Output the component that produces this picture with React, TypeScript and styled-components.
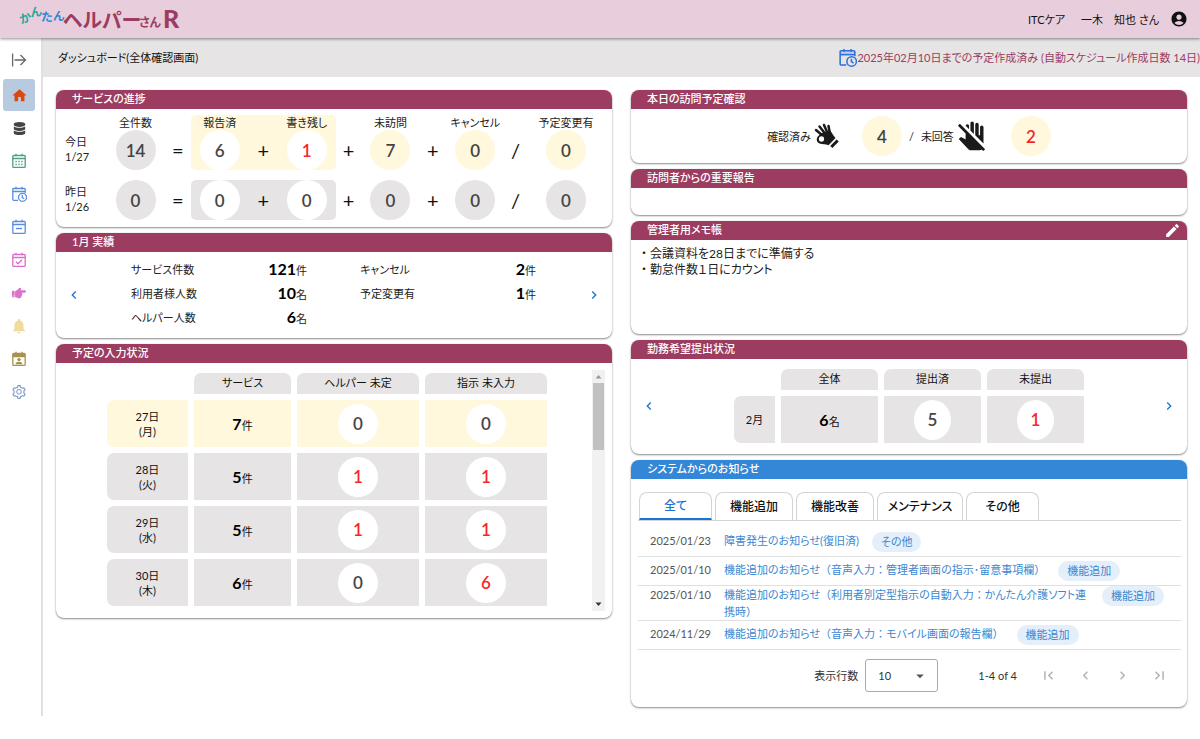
import React from "react";
import styled, { createGlobalStyle, css } from "styled-components";
import {
  MdAccountCircle,
  MdArrowDropDown,
  MdChevronLeft,
  MdChevronRight,
  MdDoNotTouch,
  MdEdit,
  MdFirstPage,
  MdHome,
  MdLastPage,
  MdNotifications,
} from "react-icons/md";
import { FaDatabase, FaHandPointRight } from "react-icons/fa";
import { AiOutlineSetting } from "react-icons/ai";

const color = {
  wine: "#9c3c60",
  blue: "#3486d7",
  link: "#3c87d0",
  grey: "#e6e4e5",
  cream: "#fff8dc",
  red: "#f8262a",
  ink: "#222",
};

const GlobalStyle = createGlobalStyle`
  * { box-sizing: border-box; }
  body {
    margin: 0;
    background: #fff;
    color: ${color.ink};
    font-family: Lato, "Noto Sans CJK JP", sans-serif;
    font-feature-settings: "palt";
    font-size: 11px;
    line-height: 15px;
  }
  button, select { font: inherit; color: inherit; font-feature-settings: inherit; }
  h1, h2, p, ul, dl, dd { margin: 0; padding: 0; font: inherit; }
  ul { list-style: none; }
`;

/* ---------- frame ---------- */

const TopBar = styled.header`
  position: relative;
  display: flex;
  align-items: center;
  justify-content: space-between;
  height: 38px;
  padding: 0 12px 0 18px;
  background: #e8cedc;
  box-shadow: 0 1px 3px rgba(0, 0, 0, 0.45);
`;

const LogoLink = styled.a`
  display: flex;
  svg { display: block; font-weight: 700; }
`;

const Account = styled.div`
  display: flex;
  align-items: center;
  gap: 16px;
  color: #111;
`;

const UserButton = styled.button`
  display: flex;
  align-items: center;
  gap: 11px;
  padding: 0;
  border: 0;
  background: none;
`;

const Frame = styled.div`
  display: flex;
`;

const SideNav = styled.nav`
  flex: none;
  width: 43px;
  padding: 6px 3px 0;
  border-right: 2px solid #e0e0e0;
`;

const NavList = styled.ul`
  display: flex;
  flex-direction: column;
  gap: 1px;
  padding-top: 3px;
`;

const navItem = css`
  display: flex;
  align-items: center;
  justify-content: center;
  width: 32px;
  height: 32px;
  border-radius: 3px;
`;

const NavLink = styled.a<{ $tint: string; $active?: boolean }>`
  ${navItem}
  color: ${(p) => p.$tint};
  background: ${(p) => (p.$active ? "#b7cae0" : "transparent")};
`;

const Toggle = styled.button`
  ${navItem}
  padding: 0;
  border: 0;
  background: none;
  color: #666;
`;

const Page = styled.div`
  flex: 1;
  min-width: 0;
`;

const TitleBar = styled.div`
  display: flex;
  align-items: center;
  justify-content: space-between;
  height: 39px;
  padding-left: 15px;
  background: ${color.grey};
`;

const PageTitle = styled.h1`
  color: #111;
`;

const ScheduleNote = styled.p`
  display: flex;
  align-items: center;
  white-space: nowrap;
  color: ${color.wine};
  svg { color: #2f6fe0; }
`;

const Columns = styled.main`
  display: grid;
  grid-template-columns: 1fr 1fr;
  gap: 19px;
  padding: 13px 13px 9px;
`;

const Column = styled.div`
  display: flex;
  flex-direction: column;
  gap: 6px;
  min-width: 0;
`;

/* ---------- card ---------- */

const CardBox = styled.section`
  border-radius: 8px;
  background: #fff;
  box-shadow: 0 1px 2px rgba(0, 0, 0, 0.45), 0 0 1px rgba(0, 0, 0, 0.2);
`;

const CardHead = styled.div<{ $tone: string }>`
  display: flex;
  justify-content: space-between;
  height: 19px;
  padding: 0 6px 0 16px;
  border-radius: 8px 8px 0 0;
  background: ${(p) => p.$tone};
  color: #fff;
  line-height: 17px;
  font-weight: 500;
  h2 { font-weight: 500; }
`;

const HeadButton = styled.button`
  display: flex;
  align-items: center;
  padding: 0;
  border: 0;
  background: none;
`;

function Card(props: {
  title: string;
  tone?: string;
  action?: React.ReactNode;
  children?: React.ReactNode;
}) {
  return (
    <CardBox>
      <CardHead $tone={props.tone ?? color.wine}>
        <h2>{props.title}</h2>
        {props.action}
      </CardHead>
      {props.children}
    </CardBox>
  );
}

const Circle = styled.span<{ $bg?: string; $alert?: boolean; $narrow?: boolean }>`
  display: flex;
  flex: none;
  align-items: center;
  justify-content: center;
  width: ${(p) => (p.$narrow ? 37 : 40)}px;
  height: 40px;
  border-radius: 50%;
  background: ${(p) => p.$bg ?? "#fff"};
  color: ${(p) => (p.$alert ? color.red : "#444")};
  font-size: 17px;
  font-weight: 600;
`;

const ArrowButton = styled.button`
  display: flex;
  flex: none;
  padding: 0;
  border: 0;
  background: none;
  color: #1976d2;
`;

/* ---------- service progress ---------- */

const Progress = styled.div`
  display: flex;
  flex-direction: column;
  gap: 10px;
  padding: 6px 16px 7px 9px;
`;

const ProgressRow = styled.div`
  display: grid;
  grid-template-columns: 50px 41px 44fr 127px 44fr 40px 45fr 40px 41fr 60px;
  align-items: end;
`;

const DayLabel = styled.div`
  align-self: end;
  padding-bottom: 6px;
`;

const Stat = styled.div`
  display: flex;
  flex-direction: column;
  align-items: center;
  white-space: nowrap;
`;

const Sign = styled.span`
  justify-self: center;
  height: 40px;
  line-height: 40px;
  font-size: 20px;
  text-align: center;
  color: #111;
`;

const Reported = styled.div<{ $bg: string }>`
  display: grid;
  grid-template-columns: 40px 1fr 40px;
  align-items: end;
  margin: 0 -9px;
  padding: 0 9px;
  border-radius: 5px;
  background: ${(p) => p.$bg};
`;

type Day = { name: string; date: string; counts: number[]; today?: boolean };

const days: Day[] = [
  { name: "今日", date: "1/27", counts: [14, 6, 1, 7, 0, 0], today: true },
  { name: "昨日", date: "1/26", counts: [0, 0, 0, 0, 0, 0] },
];

const statNames = ["全件数", "報告済", "書き残し", "未訪問", "キャンセル", "予定変更有"];

function ProgressCard() {
  return (
    <Card title="サービスの進捗">
      <Progress>
        {days.map((day) => {
          const tone = day.today ? color.cream : color.grey;
          const stat = (i: number, bg: string) => (
            <Stat>
              {day.today && <span>{statNames[i]}</span>}
              <Circle $bg={bg} $alert={i === 2 && day.counts[i] > 0}>
                {day.counts[i]}
              </Circle>
            </Stat>
          );
          return (
            <ProgressRow key={day.date}>
              <DayLabel>
                {day.name}
                <br />
                {day.date}
              </DayLabel>
              {stat(0, color.grey)}
              <Sign>=</Sign>
              <Reported $bg={tone}>
                {stat(1, "#fff")}
                <Sign>+</Sign>
                {stat(2, "#fff")}
              </Reported>
              <Sign>+</Sign>
              {stat(3, tone)}
              <Sign>+</Sign>
              {stat(4, tone)}
              <Sign>/</Sign>
              {stat(5, tone)}
            </ProgressRow>
          );
        })}
      </Progress>
    </Card>
  );
}

/* ---------- monthly results ---------- */

const Results = styled.div`
  display: flex;
  align-items: center;
  padding: 0 10px;
`;

const ResultColumns = styled.div`
  flex: 1;
  display: grid;
  grid-template-columns: 1fr 1fr;
  gap: 53px;
  padding: 5px 50px 9px 49px;
`;

const ResultRow = styled.div`
  display: flex;
  align-items: center;
  justify-content: space-between;
  height: 24px;
`;

const Big = styled.span`
  font-size: 16px;
  line-height: 24px;
  font-weight: 700;
  color: #000;
`;

const results = [
  [
    ["サービス件数", "121", "件"],
    ["利用者様人数", "10", "名"],
    ["ヘルパー人数", "6", "名"],
  ],
  [
    ["キャンセル", "2", "件"],
    ["予定変更有", "1", "件"],
  ],
];

function ResultsCard() {
  return (
    <Card title="1月 実績">
      <Results>
        <ArrowButton aria-label="前の月">
          <MdChevronLeft size={16} />
        </ArrowButton>
        <ResultColumns>
          {results.map((rows, i) => (
            <dl key={i}>
              {rows.map(([name, value, unit]) => (
                <ResultRow key={name}>
                  <dt>{name}</dt>
                  <dd>
                    <Big>{value}</Big>
                    {unit}
                  </dd>
                </ResultRow>
              ))}
            </dl>
          ))}
        </ResultColumns>
        <ArrowButton aria-label="次の月">
          <MdChevronRight size={16} />
        </ArrowButton>
      </Results>
    </Card>
  );
}

/* ---------- tables ---------- */

const Grid = styled.table`
  border-collapse: separate;
  border-spacing: 6px;
  table-layout: fixed;
  text-align: center;
  color: #111;
`;

const HeadCell = styled.th<{ $w: number }>`
  width: ${(p) => p.$w}px;
  height: 21px;
  padding: 0 0 2px;
  border-radius: 7px 7px 0 0;
  background: ${color.grey};
  font-weight: 400;
`;

const CornerCell = styled.td<{ $w: number }>`
  width: ${(p) => p.$w}px;
  padding: 0;
`;

const RowHead = styled.th<{ $today?: boolean }>`
  height: 47px;
  padding: 0;
  border-radius: 7px 0 0 7px;
  background: ${(p) => (p.$today ? color.cream : color.grey)};
  font-weight: 400;
`;

const Cell = styled.td<{ $today?: boolean }>`
  height: 47px;
  padding: 0;
  background: ${(p) => (p.$today ? color.cream : color.grey)};
  ${Circle} { margin: 0 auto; }
`;

const ScheduleBody = styled.div`
  display: flex;
  justify-content: space-between;
  padding: 4px 7px 6px 45px;
`;

const ScrollBar = styled.div`
  display: flex;
  flex-direction: column;
  justify-content: space-between;
  align-items: center;
  width: 13px;
  margin: 3px 0 1px;
  background: #f1f1f1;
  svg { display: block; }
`;

const ScrollThumb = styled.div`
  width: 11px;
  height: 67px;
  margin-bottom: auto;
  background: #c1c1c1;
`;

const schedule = [
  { day: "27日", week: "(月)", total: 7, helper: 0, order: 0, today: true },
  { day: "28日", week: "(火)", total: 5, helper: 1, order: 1 },
  { day: "29日", week: "(水)", total: 5, helper: 1, order: 1 },
  { day: "30日", week: "(木)", total: 6, helper: 0, order: 6 },
];

function ScheduleCard() {
  return (
    <Card title="予定の入力状況">
      <ScheduleBody>
        <Grid>
          <thead>
            <tr>
              <CornerCell $w={81} />
              <HeadCell $w={97}>サービス</HeadCell>
              <HeadCell $w={122}>ヘルパー 未定</HeadCell>
              <HeadCell $w={122}>指示 未入力</HeadCell>
            </tr>
          </thead>
          <tbody>
            {schedule.map((row) => (
              <tr key={row.day}>
                <RowHead scope="row" $today={row.today}>
                  {row.day}
                  <br />
                  {row.week}
                </RowHead>
                <Cell $today={row.today}>
                  <Big>{row.total}</Big>件
                </Cell>
                <Cell $today={row.today}>
                  <Circle $alert={row.helper > 0}>{row.helper}</Circle>
                </Cell>
                <Cell $today={row.today}>
                  <Circle $alert={row.order > 0}>{row.order}</Circle>
                </Cell>
              </tr>
            ))}
          </tbody>
        </Grid>
        <ScrollBar aria-hidden="true">
          <svg width="13" height="13" viewBox="0 0 13 13" fill="#999">
            <path d="M3.5 8.5h6l-3-3.5z" />
          </svg>
          <ScrollThumb />
          <svg width="13" height="13" viewBox="0 0 13 13" fill="#333">
            <path d="M3.5 4.5h6l-3 3.5z" />
          </svg>
        </ScrollBar>
      </ScheduleBody>
    </Card>
  );
}

const WishBody = styled.div`
  display: flex;
  align-items: center;
  justify-content: space-between;
  padding: 4px 10px 5px;
`;

function WishCard() {
  return (
    <Card title="勤務希望提出状況">
      <WishBody>
        <ArrowButton aria-label="前の月">
          <MdChevronLeft size={16} />
        </ArrowButton>
        <Grid>
          <thead>
            <tr>
              <CornerCell $w={41} />
              <HeadCell $w={97}>全体</HeadCell>
              <HeadCell $w={97}>提出済</HeadCell>
              <HeadCell $w={97}>未提出</HeadCell>
            </tr>
          </thead>
          <tbody>
            <tr>
              <RowHead scope="row">2月</RowHead>
              <Cell>
                <Big>6</Big>名
              </Cell>
              <Cell>
                <Circle $narrow>5</Circle>
              </Cell>
              <Cell>
                <Circle $narrow $alert>
                  1
                </Circle>
              </Cell>
            </tr>
          </tbody>
        </Grid>
        <ArrowButton aria-label="次の月">
          <MdChevronRight size={16} />
        </ArrowButton>
      </WishBody>
    </Card>
  );
}

/* ---------- right column ---------- */

const VisitBody = styled.div`
  display: flex;
  align-items: center;
  justify-content: center;
  padding: 7px;
  svg { flex: none; color: #1a1a1a; }
`;

const VisitLabel = styled.span`
  margin: 0 2px 0 7px;
`;

const VisitCount = styled.span`
  margin: 0 7px 0 22px;
`;

const EmptyBody = styled.div`
  height: 27px;
`;

const Memo = styled.p`
  min-height: 94px;
  padding: 6px 7px;
  font-size: 12px;
  line-height: 16px;
  white-space: pre-line;
`;

const NoticeBody = styled.div`
  padding: 13px 6px 15px 7px;
`;

const Tabs = styled.div`
  display: flex;
  gap: 3px;
  padding-left: 1px;
  border-bottom: 1px solid #d4d4d4;
`;

const Tab = styled.button<{ $selected?: boolean; $w: number }>`
  height: 28px;
  width: ${(p) => p.$w}px;
  padding: 0;
  border: 1px solid #d4d4d4;
  border-bottom: ${(p) => (p.$selected ? "2px solid #1976d2" : "0")};
  border-radius: 8px 8px 0 0;
  background: #fff;
  color: ${(p) => (p.$selected ? "#1976d2" : "#111")};
  font-size: 12px;
  font-weight: 500;
`;

const Notices = styled.ul`
  li {
    display: flex;
    align-items: flex-start;
    padding: 4px 17px 4px 12px;
    border-bottom: 1px solid #e0e0e0;
  }
  li:first-child { padding-top: 11px; }
  li:nth-child(3) { padding-top: 0; padding-bottom: 0; }
`;

const NoticeDate = styled.time`
  flex: none;
  width: 74px;
  line-height: 17px;
  color: #555;
`;

const NoticeLink = styled.a`
  line-height: 17px;
  text-decoration: none;
  color: ${color.link};
`;

const FullWidth = styled.span`
  font-feature-settings: normal;
`;

const Chip = styled.span`
  flex: none;
  height: 20px;
  margin-left: 13px;
  padding: 0 9px;
  border-radius: 10px;
  background: #e4effa;
  color: ${color.link};
  line-height: 20px;
`;

const Pager = styled.div`
  display: flex;
  align-items: center;
  justify-content: flex-end;
  padding: 9px 13px 0 0;
  color: #333;
`;

const SelectWrap = styled.span`
  display: grid;
  margin: 0 40px 0 7px;
  align-items: center;
  select, svg { grid-area: 1 / 1; }
  svg { justify-self: end; margin-right: 9px; pointer-events: none; color: #555; }
`;

const RowsSelect = styled.select`
  appearance: none;
  width: 73px;
  height: 33px;
  padding: 0 12px;
  border: 1px solid #aaa;
  border-radius: 3px;
  background: #fff;
`;

const PageRange = styled.span`
  margin-right: 3px;
`;

const PageButton = styled.button`
  display: flex;
  padding: 0;
  margin-left: 20px;
  border: 0;
  background: none;
  color: #b0b0b0;
`;

const notices = [
  { date: "2025/01/23", title: "障害発生のお知らせ(復旧済)", tag: "その他" },
  {
    date: "2025/01/10",
    title: "機能追加のお知らせ（音声入力：管理者画面の指示･留意事項欄）",
    tag: "機能追加",
  },
  {
    date: "2025/01/10",
    title: "機能追加のお知らせ（利用者別定型指示の自動入力：かんたん介護ソフト連携時）",
    tag: "機能追加",
  },
  {
    date: "2024/11/29",
    title: "機能追加のお知らせ（音声入力：モバイル画面の報告欄）",
    tag: "機能追加",
  },
];

const tabs = [
  { name: "全て", width: 73 },
  { name: "機能追加", width: 78 },
  { name: "機能改善", width: 78 },
  { name: "メンテナンス", width: 86 },
  { name: "その他", width: 73 },
];

/* Kana is set proportionally; brackets, colons and bullets keep their full em. */
function withFullWidthMarks(text: string) {
  return text
    .split(/([（）：・])/)
    .map((part, i) => (i % 2 ? <FullWidth key={i}>{part}</FullWidth> : part));
}

function NoticeCard() {
  return (
    <Card title="システムからのお知らせ" tone={color.blue}>
      <NoticeBody>
        <Tabs role="tablist">
          {tabs.map((tab, i) => (
            <Tab
              key={tab.name}
              role="tab"
              aria-selected={i === 0}
              $selected={i === 0}
              $w={tab.width}
            >
              {tab.name}
            </Tab>
          ))}
        </Tabs>
        <Notices>
          {notices.map((n) => (
            <li key={n.title}>
              <NoticeDate>{n.date}</NoticeDate>
              <NoticeLink href="#notice">{withFullWidthMarks(n.title)}</NoticeLink>
              <Chip>{n.tag}</Chip>
            </li>
          ))}
        </Notices>
        <Pager>
          <label htmlFor="rows">表示行数</label>
          <SelectWrap>
            <RowsSelect id="rows" defaultValue="10">
              <option>10</option>
              <option>20</option>
            </RowsSelect>
            <MdArrowDropDown size={18} />
          </SelectWrap>
          <PageRange>1-4 of 4</PageRange>
          <PageButton aria-label="最初のページ">
            <MdFirstPage size={17} />
          </PageButton>
          <PageButton aria-label="前のページ">
            <MdChevronLeft size={17} />
          </PageButton>
          <PageButton aria-label="次のページ">
            <MdChevronRight size={17} />
          </PageButton>
          <PageButton aria-label="最後のページ">
            <MdLastPage size={17} />
          </PageButton>
        </Pager>
      </NoticeBody>
    </Card>
  );
}

/* ---------- drawings ---------- */

type CalendarKind = "month" | "clock" | "note" | "check" | "person";

function CalendarIcon({ kind, size = 16 }: { kind: CalendarKind; size?: number }) {
  const heavy = kind === "person";
  return (
    <svg
      width={size}
      height={size}
      viewBox="0 0 16 16"
      fill="none"
      stroke="currentColor"
      strokeWidth={1.3}
    >
      <path d="M5 0.8v2.4M11 0.8v2.4" />
      {kind === "clock" ? (
        <path d="M7 14.4H2.7a.9.9 0 0 1-.9-.9V3.200a.9.9 0 0 1 .9-.9h10.600a.9.9 0 0 1 .9.9V7" />
      ) : (
        <rect x="1.8" y="2.3" width="12.4" height="12.1" rx="0.9" />
      )}
      <path d="M2 2.7h12v2.7H2z" fill="currentColor" fillOpacity={heavy ? 1 : 0.2} stroke="none" />
      <path d="M1.8 5.6h12.4" />
      {kind === "month" && (
        <path
          d="M4.4 8.5h1.4M7.3 8.5h1.4M10.2 8.5h1.4M4.4 11.5h1.4M7.3 11.5h1.4M10.2 11.5h1.4"
          strokeWidth={1.4}
        />
      )}
      {kind === "note" && <path d="M5 9.5h6" strokeWidth={1.4} />}
      {kind === "check" && <path d="M5 9.800l2 2 4-4" />}
      {kind === "clock" && (
        <>
          <circle cx="11.5" cy="11.3" r="4" />
          <path d="M11.3 9v2.500l1.800 1.200" />
        </>
      )}
      {kind === "person" && (
        <g fill="currentColor" stroke="none">
          <circle cx="8" cy="8.6" r="1.7" />
          <path d="M4.6 13.200c0-1.600 1.700-2.400 3.400-2.400s3.400.8 3.400 2.400z" />
        </g>
      )}
    </svg>
  );
}

function ExpandIcon() {
  return (
    <svg width="16" height="16" viewBox="0 0 16 16" fill="none" stroke="currentColor" strokeWidth="1.3">
      <path d="M1.600 1.500v13M3.500 8h11M9.500 3l5 5-5 5" />
    </svg>
  );
}

function OkHandIcon() {
  return (
    <svg width="27" height="27" viewBox="0 0 27 27" fill="none">
      <g stroke="currentColor" strokeWidth="2.5" strokeLinecap="round">
        <path d="M3 7l6.500 5.500M6.500 3.500l5.500 7M11 2l3.500 8M15.500 3l1.500 8" />
      </g>
      <path
        d="M9 10l8-2.500c2 1.500 2.500 4.500 5.500 7.500l-7 7.200c-3-1.500-6-.5-9-1.700-2.500-1-3.500-3.500-2.300-6 .9-1.900 2.600-2.900 4.800-4.500z"
        fill="currentColor"
      />
      <ellipse cx="8.5" cy="16" rx="2.6" ry="2.8" fill="#fff" />
      <path d="M18.300 24l6.400-6.500" stroke="currentColor" strokeWidth="3" />
    </svg>
  );
}

function Logo() {
  return (
    <svg width="166" height="34" viewBox="18 2 166 34" role="img" aria-label="かんたんヘルパーさんR">
      <g fontSize="12">
        <text transform="translate(21 24) rotate(-18)" fill="#1fa89b">か</text>
        <text transform="translate(31 17) rotate(-8)" fill="#1fa89b">ん</text>
        <text transform="translate(41 21) rotate(3)" fill="#2f86d8">た</text>
        <text transform="translate(53 20) rotate(3)" fill="#2f86d8">ん</text>
      </g>
      <g fill={color.wine}>
        <text x="63" y="28" fontSize="20">ヘルパー</text>
        <text x="139" y="27" fontSize="12">さん</text>
        <text x="163" y="28" fontSize="25" fontWeight="900">R</text>
      </g>
    </svg>
  );
}

const navItems: { label: string; tint: string; icon: React.ReactNode }[] = [
  { label: "ホーム", tint: "#d9480f", icon: <MdHome size={17} /> },
  { label: "マスタ", tint: "#444", icon: <FaDatabase size={13} /> },
  { label: "月間予定", tint: "#4f9f80", icon: <CalendarIcon kind="month" /> },
  { label: "予定作成", tint: "#5a8de0", icon: <CalendarIcon kind="clock" /> },
  { label: "予定一覧", tint: "#5a8de0", icon: <CalendarIcon kind="note" /> },
  { label: "実績確認", tint: "#dd6cc8", icon: <CalendarIcon kind="check" /> },
  { label: "指示", tint: "#da74cb", icon: <FaHandPointRight size={14} /> },
  { label: "お知らせ", tint: "#efdb9c", icon: <MdNotifications size={18} /> },
  { label: "勤務希望", tint: "#a8924c", icon: <CalendarIcon kind="person" /> },
  { label: "設定", tint: "#8398c4", icon: <AiOutlineSetting size={16} /> },
];

export default function App() {
  return (
    <>
      <GlobalStyle />
      <TopBar>
        <LogoLink href="#home">
          <Logo />
        </LogoLink>
        <Account>
          <span>ITCケア</span>
          <UserButton>
            一木　知也 さん
            <MdAccountCircle size={18} />
          </UserButton>
        </Account>
      </TopBar>
      <Frame>
        <SideNav aria-label="メニュー">
          <Toggle aria-label="メニューを開く">
            <ExpandIcon />
          </Toggle>
          <NavList>
            {navItems.map((item, i) => (
              <li key={item.label}>
                <NavLink href="#menu" aria-label={item.label} $tint={item.tint} $active={i === 0}>
                  {item.icon}
                </NavLink>
              </li>
            ))}
          </NavList>
        </SideNav>
        <Page>
          <TitleBar>
            <PageTitle>ダッシュボード(全体確認画面)</PageTitle>
            <ScheduleNote>
              <CalendarIcon kind="clock" size={19} />
              2025年02月10日までの予定作成済み (自動スケジュール作成日数 14日)
            </ScheduleNote>
          </TitleBar>
          <Columns>
            <Column>
              <ProgressCard />
              <ResultsCard />
              <ScheduleCard />
            </Column>
            <Column>
              <Card title="本日の訪問予定確認">
                <VisitBody>
                  <VisitLabel>確認済み</VisitLabel>
                  <OkHandIcon />
                  <VisitCount>
                    <Circle $bg={color.cream}>4</Circle>
                  </VisitCount>
                  <span>/</span>
                  <VisitLabel>未回答</VisitLabel>
                  <MdDoNotTouch size={33} />
                  <VisitCount>
                    <Circle $bg={color.cream} $alert>
                      2
                    </Circle>
                  </VisitCount>
                </VisitBody>
              </Card>
              <Card title="訪問者からの重要報告">
                <EmptyBody />
              </Card>
              <Card
                title="管理者用メモ帳"
                action={
                  <HeadButton aria-label="メモを編集">
                    <MdEdit size={17} />
                  </HeadButton>
                }
              >
                <Memo>
                  {withFullWidthMarks("・会議資料を28日までに準備する\n・勤怠件数１日にカウント")}
                </Memo>
              </Card>
              <WishCard />
              <NoticeCard />
            </Column>
          </Columns>
        </Page>
      </Frame>
    </>
  );
}
